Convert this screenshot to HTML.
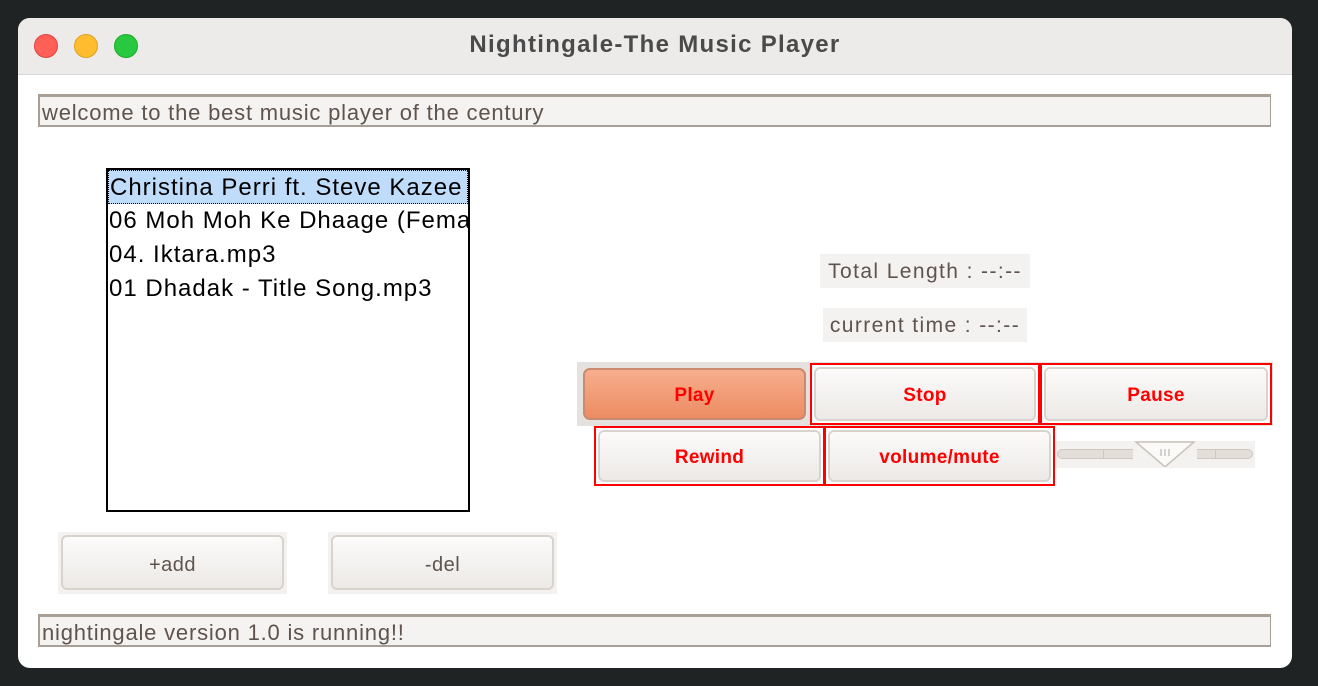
<!DOCTYPE html>
<html><head><style>
body{margin:0;width:1318px;height:686px;background:#202324;position:relative;overflow:hidden;font-family:"Liberation Sans",Arial,sans-serif}
.a{position:absolute}
.win{left:18px;top:18px;width:1274px;height:650px;background:#fff;border-radius:12px;overflow:hidden}
.tb{left:0;top:0;width:1274px;height:56px;background:#ecebe9;border-bottom:1px solid #d8d6d4}
.dot{width:24px;height:24px;border-radius:50%;top:16px}
.fld{background:#f5f3f1;border-top:3px solid #a89f96;border-bottom:2px solid #a89f96;border-left:2px solid #a89f96;border-right:1px solid #a89f96;box-sizing:border-box;color:#5e534d;font-size:22px;letter-spacing:0.8px;padding-left:2px;line-height:31px;white-space:nowrap}
.btn{background:linear-gradient(#fcfbfa,#ece9e6);border:2px solid #d9d3cd;border-radius:6px;box-sizing:border-box;text-align:center;font-size:20px;letter-spacing:0.5px;color:#5e534d}
.rb{color:#f00;font-weight:bold;font-size:19px;letter-spacing:0.3px}
.rbox{border:2px solid #f00;box-sizing:border-box}
.row{left:2px;width:360px;height:34px;font-size:24px;letter-spacing:1px;line-height:34px;color:#000;white-space:nowrap;overflow:hidden;padding-left:1px;box-sizing:border-box}
.lbl{background:#f4f2f0;color:#5e534d;font-size:21px;letter-spacing:1.4px;line-height:36px;text-align:center;white-space:nowrap}
</style></head><body>
<div class="a win">
 <div class="a tb">
  <div class="a dot" style="left:16px;background:#fe5f57;border:1px solid #e0443e;box-sizing:border-box"></div>
  <div class="a dot" style="left:56px;background:#febc2e;border:1px solid #dea123;box-sizing:border-box"></div>
  <div class="a dot" style="left:96px;background:#28c840;border:1px solid #1aab29;box-sizing:border-box"></div>
  <div class="a" style="left:0;width:1274px;top:0;line-height:54px;text-align:center;font-weight:bold;font-size:24px;letter-spacing:1.3px;color:#4a4a4a">Nightingale-The Music Player</div>
 </div>
 <div class="a fld" style="left:20px;top:76px;width:1233px;height:33px">welcome to the best music player of the century</div>
 <div class="a" style="left:88px;top:150px;width:364px;height:344px;border:2px solid #000;box-sizing:border-box">
  <div class="a row" style="top:0;left:0;width:360px;background:#bfdcfb;border:1px dotted #000">Christina Perri ft. Steve Kazee</div>
  <div class="a row" style="top:34px;left:0">06 Moh Moh Ke Dhaage (Female)</div>
  <div class="a row" style="top:68px;left:0">04. Iktara.mp3</div>
  <div class="a row" style="top:102px;left:0">01 Dhadak - Title Song.mp3</div>
 </div>
 <div class="a lbl" style="left:802px;top:236px;width:210px;height:34px">Total Length : --:--</div>
 <div class="a lbl" style="left:805px;top:290px;width:204px;height:34px">current time : --:--</div>
 <div class="a" style="left:559px;top:344px;width:696px;height:64px;background:#e4e1df"></div>
 <div class="a rb" style="left:565px;top:350px;width:223px;height:52px;background:linear-gradient(#f7ae8d,#ec8c63);border:2px solid #c98a70;border-radius:7px;box-sizing:border-box;text-align:center;line-height:52px">Play</div>
 <div class="a rbox" style="left:792px;top:345px;width:230px;height:62px;background:#fff"><div class="a btn rb" style="left:2px;top:2px;width:222px;height:54px;line-height:54px;color:#f00">Stop</div></div>
 <div class="a rbox" style="left:1022px;top:345px;width:232px;height:62px;background:#fff"><div class="a btn rb" style="left:2px;top:2px;width:224px;height:54px;line-height:54px;color:#f00">Pause</div></div>
 <div class="a rbox" style="left:576px;top:408px;width:231px;height:60px;background:#fff"><div class="a btn rb" style="left:2px;top:2px;width:223px;height:52px;line-height:52px;color:#f00">Rewind</div></div>
 <div class="a rbox" style="left:806px;top:408px;width:231px;height:60px;background:#fff"><div class="a btn rb" style="left:2px;top:2px;width:223px;height:52px;line-height:52px;color:#f00">volume/mute</div></div>
 <div class="a" style="left:1037px;top:423px;width:200px;height:27px;background:#f4f2f0">
  <div class="a" style="left:2px;top:8px;width:196px;height:10px;background:#e4ded8;border:1px solid #cfc8c1;border-radius:5px;box-sizing:border-box"></div>
  <div class="a" style="left:48px;top:8px;width:1px;height:10px;background:#cfc8c1"></div>
  <div class="a" style="left:160px;top:8px;width:1px;height:10px;background:#cfc8c1"></div>
  <svg class="a" style="left:78px;top:0" width="64" height="27"><rect x="0" y="0" width="64" height="27" fill="#f4f2f0"/><path d="M3 1 H61 L33 25 H31 Z" fill="#fbfaf9" stroke="#c9c2bb" stroke-width="1.5"/><path d="M28 8v7M32 8v7M36 8v7" stroke="#b0a8a0"/></svg>
 </div>
 <div class="a" style="left:40px;top:514px;width:229px;height:62px;background:#f4f2f0"><div class="a btn" style="left:3px;top:3px;width:223px;height:55px;line-height:57px">+add</div></div>
 <div class="a" style="left:310px;top:514px;width:229px;height:62px;background:#f4f2f0"><div class="a btn" style="left:3px;top:3px;width:223px;height:55px;line-height:57px">-del</div></div>
 <div class="a fld" style="left:20px;top:596px;width:1233px;height:33px">nightingale version 1.0 is running!!</div>
</div>
</body></html>
